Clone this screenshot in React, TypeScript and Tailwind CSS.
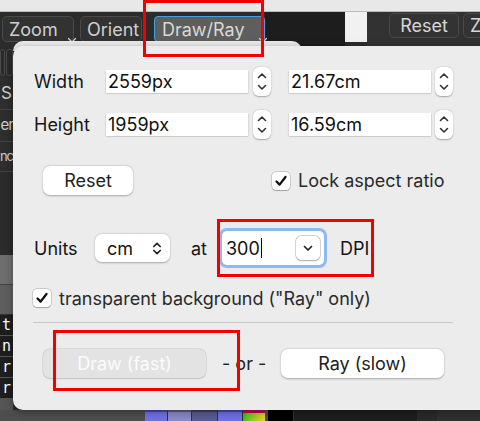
import React from "react";

const font = { fontFamily: "Inter, 'Noto Sans', 'Liberation Sans', sans-serif" };

function Stepper() {
  return (
    <div className="w-[18px] h-[29px] rounded-[6px] bg-white shadow-[0_0.5px_1.5px_rgba(0,0,0,0.3)] flex flex-col items-center justify-center gap-[5px]">
      <svg width="10" height="7" viewBox="0 0 10 7">
        <path d="M1.5 5.5 L5 2 L8.5 5.5" fill="none" stroke="#333" strokeWidth="1.6" strokeLinecap="round" strokeLinejoin="round" />
      </svg>
      <svg width="10" height="7" viewBox="0 0 10 7">
        <path d="M1.5 1.5 L5 5 L8.5 1.5" fill="none" stroke="#333" strokeWidth="1.6" strokeLinecap="round" strokeLinejoin="round" />
      </svg>
    </div>
  );
}

function Field({ value }: { value: string }) {
  return (
    <div className="w-[142px] h-[23px] bg-white shadow-[0_0.5px_1.5px_rgba(0,0,0,0.35)] flex items-center pl-[2px] text-[18px] text-[#111] leading-none">
      {value}
    </div>
  );
}

function Checkbox() {
  return (
    <div className="shrink-0 w-[18px] h-[18px] rounded-[4px] bg-white shadow-[0_0_0_0.5px_rgba(0,0,0,0.25),0_0.5px_1px_rgba(0,0,0,0.2)] flex items-center justify-center">
      <svg width="14" height="14" viewBox="0 0 14 14">
        <path d="M2.5 7.5 L5.6 10.6 L11.5 3" fill="none" stroke="#111" strokeWidth="2.3" strokeLinecap="round" strokeLinejoin="round" />
      </svg>
    </div>
  );
}

function ToolChevron() {
  return (
    <svg className="absolute right-[-4px] bottom-[-3px]" width="10" height="7" viewBox="0 0 10 7">
      <path d="M1.5 1.5 L5 5 L8.5 1.5" fill="none" stroke="#cfcfcf" strokeWidth="1.3" strokeLinecap="round" strokeLinejoin="round" />
    </svg>
  );
}

export default function App() {
  return (
    <div className="relative w-[480px] h-[421px] overflow-hidden bg-[#2b2b2b]" style={font}>
      {/* top light bar */}
      <div className="h-[12px] bg-[#e8e8e8] border-b border-[#bdbdbd]" />
      {/* toolbar */}
      <div className="h-[35px] flex items-stretch bg-[#2c2c2c] overflow-hidden">
        <div className="shrink-0 flex items-start pt-[4px] pl-[2px] gap-[6px]">
          <div className="shrink-0 relative w-[72px] h-[26px] rounded-[5px] border border-[#4a4a4a] bg-[#323232] text-[#cfcfcf] text-[18px] flex items-center pl-[6px]">
            Zoom
            <ToolChevron />
          </div>
          <div className="shrink-0 w-[62px] h-[26px] rounded-[5px] border border-[#4a4a4a] bg-[#323232] text-[#cfcfcf] text-[18px] flex items-center pl-[6px]">
            Orient
          </div>
          <div className="shrink-0 relative ml-[6px] w-[111px] h-[26px] rounded-[4px] border border-[#3ea5de] bg-[#5e5e5e] text-[#d8d8d8] text-[18px] flex items-center pl-[7px]">
            Draw/Ray
            <ToolChevron />
          </div>
        </div>
        <div className="shrink-0 w-[80px] bg-[#1d1d1d]" />
        <div className="shrink-0 w-[22px] bg-[#f1f1f1] mb-[5px]" />
        <div className="shrink-0 w-[140px] bg-[#323232] flex items-start pt-[1px] pl-[22px] gap-[4px]">
          <div className="shrink-0 w-[70px] h-[25px] rounded-[5px] border border-[#4a4a4a] bg-[#333] text-[#d6d6d6] text-[18px] flex items-center justify-center">
            Reset
          </div>
          <div className="shrink-0 w-[30px] h-[25px] rounded-[5px] border border-[#4a4a4a] bg-[#333] text-[#d6d6d6] text-[18px] flex items-center pl-[6px]">
            Z
          </div>
        </div>
      </div>
      {/* left strip */}
      <div className="w-[13px] h-[363px] flex flex-col overflow-hidden text-[#cfcfcf] text-[15px]">
        <div className="h-[31px] flex gap-[1px] pt-[2px]">
          <div className="w-[5px] h-[27px] border border-[#4a4a4a] rounded-[3px]" />
          <div className="w-[7px] h-[27px] border border-[#4a4a4a] rounded-[3px]" />
        </div>
        <div className="h-[32px] flex items-center justify-end pr-[1px] border-b border-[#444] bg-[#2e2e2e] text-[17px]">S</div>
        <div className="h-[32px] flex items-center justify-end border-b border-[#444] bg-[#2e2e2e] tracking-[-1px]">er</div>
        <div className="h-[30px] flex items-center justify-end border-b border-[#444] bg-[#2e2e2e] text-[13px] tracking-[-1px]">nc</div>
        <div className="h-[83px] bg-[#2b2b2b]" />
        <div className="h-[30px] bg-[#6e6e6e] border-b border-[#444]" />
        <div className="h-[30px] bg-[#5e5e5e] border-b border-[#333]" />
        {["t", "n", "r", "r"].map((c, i) => (
          <div key={i} className="h-[21px] bg-[#1e1e1e] border-b border-[#555] flex items-center justify-start pl-[2px] text-white text-[15px]" style={{ fontFamily: "'DejaVu Sans Mono', monospace" }}>
            {c}
          </div>
        ))}
        <div className="flex-1 bg-[#555]" />
      </div>
      {/* bottom strip */}
      <div className="absolute left-0 right-0 bottom-0 h-[11px] flex bg-[#4c4c4c]">
        <div className="shrink-0 w-[145px] bg-[#4e4e4e]" />
        <div className="shrink-0 w-[23px] bg-[#6f70e6] border-t-2 border-[#4848a8] border-r border-r-[#333]" />
        <div className="shrink-0 w-[24px] bg-[#8a8ac6] border-t-2 border-[#5a5a90] border-r border-r-[#333]" />
        <div className="shrink-0 w-[26px] bg-[#5a5b92] border-t-2 border-[#3e3e6a] border-r border-r-[#333]" />
        <div className="shrink-0 w-[25px] bg-[#6f70e6] border-t-2 border-[#4848a8] border-r border-r-[#333]" />
        <div className="shrink-0 w-[22px] flex flex-col">
          <div className="h-[3px] bg-[#b0104a]" />
          <div className="flex-1 bg-gradient-to-r from-[#22c022] to-[#e8d020]" />
        </div>
        <div className="shrink-0 w-[25px] bg-black ml-[3px]" />
        <div className="shrink-0 w-[124px] bg-[#1e1e1e] border-l border-[#333]" />
        <div className="shrink-0 w-[20px] bg-[#2a2a2a]" />
        <div className="flex-1 bg-[#303030]" />
      </div>

      {/* popover */}
      <div className="absolute left-[13px] top-[41px] w-[289px] h-[10px] bg-[#ececec] rounded-t-[10px]" />
      <div className="absolute left-[13px] top-[46px] right-[-12px] bottom-[11px] bg-[#ececec] rounded-[10px] shadow-[0_2px_8px_rgba(0,0,0,0.35)] pl-[20px] pt-[21px] text-[#151515] text-[18px]">
        <div className="flex flex-col">
          {[
            ["Width", "2559px", "21.67cm"],
            ["Height", "1959px", "16.59cm"],
          ].map(([label, a, b], i) => (
            <div key={label} className={`flex items-center h-[29px] ${i === 1 ? "mt-[14px]" : ""}`}>
              <div className="w-[73px] pl-[1px]">{label}</div>
              <Field value={a} />
              <div className="ml-[5px]"><Stepper /></div>
              <div className="ml-[18px]"><Field value={b} /></div>
              <div className="ml-[4px]"><Stepper /></div>
            </div>
          ))}
          <div className="flex items-center mt-[27px] h-[29px]">
            <div className="shrink-0 ml-[10px] w-[90px] h-[29px] rounded-[7px] bg-white shadow-[0_0.5px_2px_rgba(0,0,0,0.3)] flex items-center justify-center text-[#222]">
              Reset
            </div>
            <div className="ml-[139px] flex items-center gap-[8px] text-[#2a2a2a] whitespace-nowrap">
              <Checkbox />
              <span>Lock aspect ratio</span>
            </div>
          </div>
          <div className="flex items-center mt-[33px] h-[40px]">
            <div className="w-[62px] pl-[1px]">Units</div>
            <div className="w-[75px] h-[28px] rounded-[7px] bg-white shadow-[0_0.5px_2px_rgba(0,0,0,0.3)] flex items-center justify-between pl-[12px] pr-[8px]">
              <span>cm</span>
              <svg width="10" height="15" viewBox="0 0 10 15">
                <path d="M1.8 5.5 L5 2.3 L8.2 5.5 M1.8 9.5 L5 12.7 L8.2 9.5" fill="none" stroke="#222" strokeWidth="1.7" strokeLinecap="round" strokeLinejoin="round" />
              </svg>
            </div>
            <div className="ml-[21px] w-[28px]">at</div>
            <div className="w-[108px] h-[40px] rounded-[8px] bg-[#8dbaf3] p-[3px]">
              <div className="w-full h-full rounded-[5px] bg-white flex items-center justify-between pl-[4px] pr-[4px]">
                <span className="flex items-center text-[18px] text-[#111]">
                  300<span className="inline-block w-[1.5px] h-[20px] bg-black ml-[1px]" />
                </span>
                <div className="w-[24px] h-[24px] rounded-[5px] bg-white shadow-[0_0_0_0.5px_rgba(0,0,0,0.25),0_0.5px_1.5px_rgba(0,0,0,0.25)] flex items-center justify-center">
                  <svg width="10" height="7" viewBox="0 0 10 7">
                    <path d="M1.5 1.5 L5 5 L8.5 1.5" fill="none" stroke="#222" strokeWidth="1.7" strokeLinecap="round" strokeLinejoin="round" />
                  </svg>
                </div>
              </div>
            </div>
            <div className="ml-[13px]">DPI</div>
          </div>
          <div className="flex items-center gap-[8px] mt-[21px] h-[18px] text-[#2a2a2a] whitespace-nowrap">
            <Checkbox />
            <span>transparent background ("Ray" only)</span>
          </div>
          <div className="mt-[15px] w-[420px] h-[1px] bg-[#c8c8c8]" />
          <div className="flex items-center mt-[26px] h-[29px]">
            <div className="shrink-0 ml-[10px] w-[163px] h-[29px] rounded-[7px] bg-[#e3e3e3] shadow-[0_0_0_0.5px_rgba(0,0,0,0.12),0_0.5px_1.5px_rgba(0,0,0,0.12)] flex items-center justify-center text-[#fbfbfb]">
              Draw (fast)
            </div>
            <div className="shrink-0 ml-[16px] w-[59px] text-[#222]">- or -</div>
            <div className="shrink-0 w-[163px] h-[29px] rounded-[7px] bg-white shadow-[0_0.5px_2px_rgba(0,0,0,0.3)] flex items-center justify-center text-[#222]">
              Ray (slow)
            </div>
          </div>
        </div>
      </div>

      {/* red annotation boxes */}
      <div className="absolute left-[143px] top-0 w-[121px] h-[57px] border-[3px] border-[#f00000] pointer-events-none" />
      <div className="absolute left-[217px] top-[219px] w-[157px] h-[58px] border-[3px] border-[#f00000] pointer-events-none" />
      <div className="absolute left-[53px] top-[330px] w-[187px] h-[61px] border-[3px] border-[#f00000] pointer-events-none" />
    </div>
  );
}
